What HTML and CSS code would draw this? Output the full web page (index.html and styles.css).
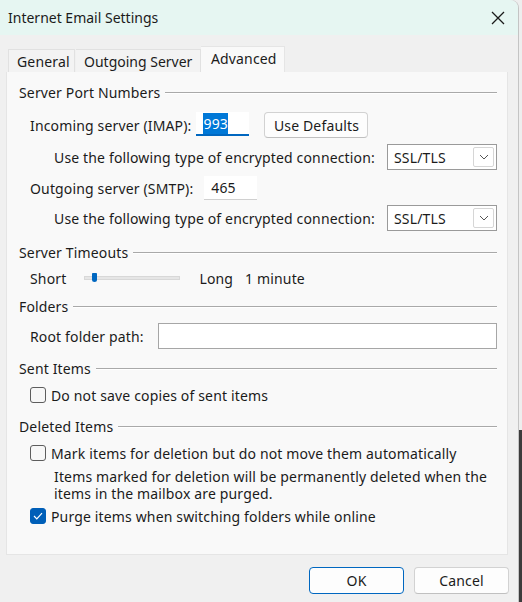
FILE: index.html
```html
<html>

<head>
    <link rel="stylesheet" href="styles.css">
</head>

<body>
    <div class="dialog">
        <div class="titlebar">
            <span class="title">Internet Email Settings</span>
            <svg class="close" width="14" height="14" viewBox="0 0 14 14">
                <path d="M1 1 L13 13 M13 1 L1 13" stroke="#1a1a1a" stroke-width="1.3" fill="none" />
            </svg>
        </div>
        <div class="content">
            <div class="tabs">
                <div class="tab tab-general">General</div>
                <div class="tab tab-outgoing">Outgoing Server</div>
                <div class="tab active">Advanced</div>
            </div>
            <div class="panel">
                <div class="group-head"><span>Server Port Numbers</span><i></i></div>

                <div class="row row-incoming">
                    <span class="lbl">Incoming server (IMAP):</span>
                    <div class="port focused"><span class="sel">993</span></div>
                    <button class="btn defaults">Use Defaults</button>
                </div>
                <div class="row row-conn">
                    <span class="lbl">Use the following type of encrypted connection:</span>
                    <div class="select"><span>SSL/TLS</span><b class="drop"><svg width="10" height="6" viewBox="0 0 10 6"><path d="M1 1 L5 5 L9 1" stroke="#555" fill="none" /></svg></b></div>
                </div>
                <div class="row row-outgoing">
                    <span class="lbl">Outgoing server (SMTP):</span>
                    <div class="port"><span>465</span></div>
                </div>
                <div class="row row-conn row-conn2">
                    <span class="lbl">Use the following type of encrypted connection:</span>
                    <div class="select"><span>SSL/TLS</span><b class="drop"><svg width="10" height="6" viewBox="0 0 10 6"><path d="M1 1 L5 5 L9 1" stroke="#555" fill="none" /></svg></b></div>
                </div>

                <div class="group-head head-timeouts"><span>Server Timeouts</span><i></i></div>
                <div class="row row-slider">
                    <span class="lbl">Short</span>
                    <div class="slider"><div class="track"></div><div class="thumb"></div></div>
                    <span class="lbl long">Long</span>
                    <span class="lbl">1 minute</span>
                </div>

                <div class="group-head head-folders"><span>Folders</span><i></i></div>
                <div class="row row-root">
                    <span class="lbl">Root folder path:</span>
                    <div class="textbox"></div>
                </div>

                <div class="group-head head-sent"><span>Sent Items</span><i></i></div>
                <div class="row row-check row-cb1">
                    <span class="box"></span>
                    <span class="lbl">Do not save copies of sent items</span>
                </div>

                <div class="group-head head-deleted"><span>Deleted Items</span><i></i></div>
                <div class="row row-check row-cb2">
                    <span class="box"></span>
                    <span class="lbl">Mark items for deletion but do not move them automatically</span>
                </div>
                <p class="note">Items marked for deletion will be permanently deleted when the items in the mailbox are purged.</p>
                <div class="row row-check row-cb3">
                    <span class="box checked"><svg width="10" height="8" viewBox="0 0 10 8"><path d="M1 4 L3.8 6.8 L9 1.2" stroke="#fff" stroke-width="1.2" fill="none" /></svg></span>
                    <span class="lbl">Purge items when switching folders while online</span>
                </div>
            </div>
            <div class="buttons">
                <button class="btn ok">OK</button>
                <button class="btn cancel">Cancel</button>
            </div>
        </div>
    </div>
</body>

</html>
```

FILE: styles.css
```css
html {
    background: linear-gradient(#eeeeee 0, #eeeeee 430px, #3c3c3c 430px);
}

body {
    margin: 0;
    font-family: "Noto Sans", "Open Sans", sans-serif;
    font-size: 14px;
    letter-spacing: 0.15px;
    color: #1b1b1b;
}

.dialog {
    width: 518px;
    height: 602px;
    background: #f0f0f0;
    border-top-right-radius: 8px;
    overflow: hidden;
    box-shadow: 1px 0 0 #c4c4c4;
}

.titlebar {
    height: 35px;
    background: #e6f6f2;
    display: flex;
    align-items: center;
    padding: 0 12px 0 8px;
}

.title {
    font-size: 14px;
    letter-spacing: 0;
    flex-grow: 1;
    padding-bottom: 1px;
}

.close {
    margin-right: 1px;
}

.content {
    padding: 11px 10px 0 6px;
}

/* tabs */

.tabs {
    display: flex;
    align-items: flex-end;
    height: 26px;
    padding-left: 2px;
}

.tab {
    height: 23px;
    line-height: 23px;
    padding: 0 8px;
    white-space: nowrap;
    background: #f3f3f3;
    border: 1px solid #e1e1e1;
    border-bottom: none;
    box-sizing: border-box;
}

.tab-general {
    width: 67px;
}

.tab-outgoing {
    width: 125px;
    margin-left: 1px;
    border-left: none;
    letter-spacing: 0;
}

.tab.active {
    height: 26px;
    line-height: 24px;
    width: 84px;
    padding: 0 10px;
    background: #f9f9f9;
    border-left: none;
    border-color: #e5e5e5;
}

.panel {
    height: 483px;
    box-sizing: border-box;
    background: #f9f9f9;
    border: 1px solid #e5e5e5;
    border-top: none;
    padding: 10px 10px 0 12px;
}

/* group headers */

.group-head {
    height: 20px;
    display: flex;
    align-items: center;
}

.group-head i {
    flex-grow: 1;
    height: 1px;
    background: #a9a9a9;
    border-bottom: 1px solid #ffffff;
    margin-left: 5px;
    margin-top: 1px;
}

.head-timeouts {
    margin-top: 11px;
}

.head-folders {
    margin-top: 8px;
}

.head-sent {
    margin-top: 9px;
}

.head-deleted {
    margin-top: 11px;
}

/* rows */

.row {
    display: flex;
    align-items: center;
    padding-left: 11px;
}

.row-incoming {
    height: 26px;
    margin-top: 10px;
}

.row-conn {
    height: 26px;
    margin-top: 6px;
    padding-left: 35px;
}

.row-conn2 {
    margin-top: 4px;
}

.row-outgoing {
    height: 26px;
    margin-top: 5px;
}

.row-incoming .lbl {
    margin-right: 5px;
}

.row-outgoing .lbl {
    margin-right: 11px;
}

.port {
    height: 24px;
    width: 53px;
    box-sizing: border-box;
    background: #ffffff;
    border-bottom: 1px solid #d0d0d0;
    padding-left: 7px;
    line-height: 23px;
}

.port.focused {
    border-bottom: 2px solid #0067c0;
    height: 24px;
    margin-top: -2px;
}

.sel {
    background: #0078d7;
    color: #ffffff;
    padding: 1px 0;
}

.btn {
    font-family: inherit;
    font-size: 14px;
    letter-spacing: 0.15px;
    color: #1b1b1b;
    background: #fdfdfd;
    border: 1px solid #d2d2d2;
    border-bottom-color: #c0c0c0;
    border-radius: 4px;
    padding: 0;
}

.defaults {
    width: 104px;
    height: 26px;
    margin-left: 15px;
}

.select {
    margin-left: auto;
    width: 110px;
    height: 26px;
    box-sizing: border-box;
    border: 1px solid #9a9a9a;
    background: #ffffff;
    display: flex;
    align-items: center;
    padding: 0 2px 0 6px;
}

.select span {
    flex-grow: 1;
}

.drop {
    width: 21px;
    height: 20px;
    box-sizing: border-box;
    border: 1px solid #d6d6d6;
    border-radius: 2px;
    display: flex;
    align-items: center;
    justify-content: center;
}

/* slider */

.row-slider {
    height: 20px;
    margin-top: 6px;
}

.slider {
    position: relative;
    width: 96px;
    height: 10px;
    margin-left: 18px;
    margin-right: 19px;
}

.track {
    margin-top: 3px;
    height: 4px;
    background: #e6e6e6;
    border: 1px solid #d8d8d8;
    box-sizing: border-box;
}

.thumb {
    position: absolute;
    left: 8px;
    top: 0;
    width: 5px;
    height: 9px;
    background: #0067c0;
    border-radius: 1px 1px 3px 3px;
}

.long {
    margin-right: 12px;
}

/* folders */

.row-root {
    height: 26px;
    margin-top: 7px;
}

.textbox {
    flex-grow: 1;
    height: 26px;
    margin-left: 14px;
    box-sizing: border-box;
    background: #ffffff;
    border: 1px solid #a6a6a6;
}

/* checkboxes */

.row-check {
    height: 20px;
}

.row-cb1 {
    margin-top: 7px;
}

.row-cb2 {
    margin-top: 7px;
}

.row-cb3 {
    margin-top: 4px;
}

.box {
    width: 16px;
    height: 16px;
    box-sizing: border-box;
    border: 1px solid #5d5d5d;
    border-radius: 3px;
    background: #f7f7f7;
    margin-right: 5px;
    display: flex;
    align-items: center;
    justify-content: center;
}

.box.checked {
    background: #005fb8;
    border-color: #005fb8;
}

.note {
    margin: 5px 0 0 35px;
    line-height: 17px;
    width: 440px;
}

/* bottom buttons */

.buttons {
    display: flex;
    justify-content: flex-end;
    padding-top: 12px;
    margin-right: -1px;
}

.buttons .btn {
    width: 95px;
    height: 27px;
}

.ok {
    border: 1px solid #0067c0;
    margin-right: 10px;
}
```
